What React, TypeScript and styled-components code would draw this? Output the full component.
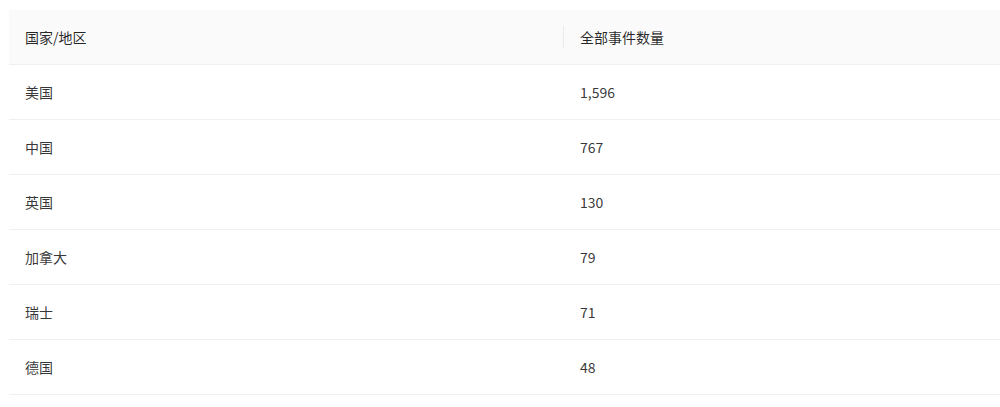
import React from 'react';
import styled, { createGlobalStyle } from 'styled-components';

const GlobalStyle = createGlobalStyle`
  body {
    margin: 0;
    background: #fff;
    font-family: "Noto Sans CJK SC", "Noto Sans", "Liberation Sans", sans-serif;
  }
`;

// Page wrapper with the small offset seen around the table.
const Page = styled.div`
  padding: 10px 0 0 9px;
  overflow: hidden;
`;

const Table = styled.table`
  width: 991px;
  border-collapse: separate;
  border-spacing: 0;
  table-layout: fixed;
  font-size: 14px;
  line-height: 22px;
  color: rgba(0, 0, 0, 0.85);
`;

const HeadCell = styled.th<{ $divider?: boolean }>`
  position: relative;
  padding: 16px;
  text-align: left;
  font-weight: 400;
  background: #fafafa;
  border-bottom: 1px solid #f0f0f0;

  &::before {
    content: '';
    display: ${(p) => (p.$divider ? 'block' : 'none')};
    position: absolute;
    top: 50%;
    right: 0;
    width: 1px;
    height: 22px;
    transform: translateY(-50%);
    background: rgba(0, 0, 0, 0.06);
  }
`;

const Cell = styled.td`
  padding: 16px;
  border-bottom: 1px solid #f0f0f0;
  color: rgba(0, 0, 0, 0.8);
`;

const rows = [
  { country: '美国', count: 1596 },
  { country: '中国', count: 767 },
  { country: '英国', count: 130 },
  { country: '加拿大', count: 79 },
  { country: '瑞士', count: 71 },
  { country: '德国', count: 48 },
];

const App: React.FC = () => {
  return (
    <Page>
      <GlobalStyle />
      <Table>
        <colgroup>
          <col style={{ width: 555 }} />
          <col />
        </colgroup>
        <thead>
          <tr>
            <HeadCell $divider>国家/地区</HeadCell>
            <HeadCell>全部事件数量</HeadCell>
          </tr>
        </thead>
        <tbody>
          {rows.map((r) => (
            <tr key={r.country}>
              <Cell>{r.country}</Cell>
              <Cell>{r.count.toLocaleString('en-US')}</Cell>
            </tr>
          ))}
        </tbody>
      </Table>
    </Page>
  );
};

export default App;
